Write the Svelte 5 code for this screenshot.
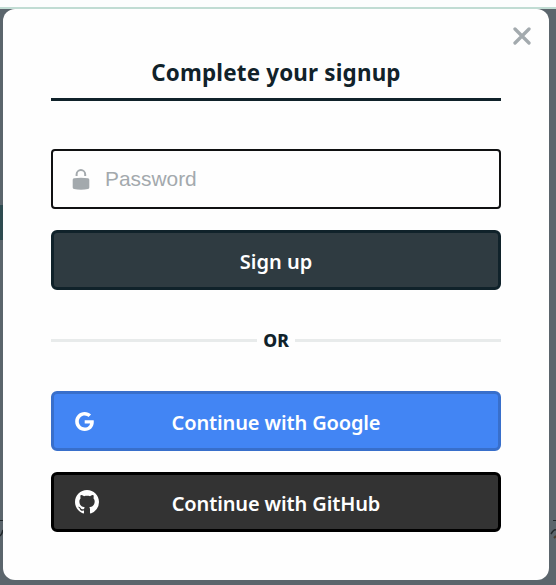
<script>
  let password = $state('');
</script>

<div class="page">
  <div class="topbar"></div>
  <div class="backdrop">
    <span class="accent"></span>
    <svg class="sketch" width="556" height="60" viewBox="0 0 556 60" fill="none" stroke="#20272a">
      <path d="M0 20.5H3M553 20.5H556" />
      <path d="M0 36Q2 34 3 30M551 34Q554 29 556 30" stroke-width="1.5" />
      <path d="M554 38L556 36" stroke="#4c3b2d" stroke-width="2" />
    </svg>
    <section class="modal">
      <button class="close" aria-label="Close">
        <svg width="18" height="18" viewBox="0 0 18 18" fill="none" stroke="#a3aaae" stroke-width="3.3" stroke-linecap="round">
          <path d="M2 2L16 16M16 2L2 16" />
        </svg>
      </button>
      <h1><span>Complete your signup</span></h1>
      <label class="field">
        <svg width="18" height="22" viewBox="0 0 18 22" fill="none">
          <path d="M4.6 8V6.4a4.3 4.3 0 0 1 8.6 0V8" stroke="#a3a9ad" stroke-width="2" />
          <path d="M2 10.2Q9 9.1 16 10.2Q17.3 10.4 17.3 11.7V19.6Q17.3 20.9 16 21.1Q9 22.2 2 21.1Q.7 20.9 .7 19.6V11.7Q.7 10.4 2 10.2Z" fill="#a3a9ad" />
        </svg>
        <input type="password" placeholder="Password" bind:value={password} />
      </label>
      <button class="btn signup"><span>Sign up</span></button>
      <div class="divider"><span>OR</span></div>
      <button class="btn google">
        <svg class="g" width="19" height="19" viewBox="0 0 24 24" fill="#fff">
          <path d="M12.24 10.285V14.4h6.806c-.275 1.765-2.056 5.174-6.806 5.174-4.095 0-7.439-3.389-7.439-7.574s3.345-7.574 7.439-7.574c2.33 0 3.891.989 4.785 1.849l3.254-3.138C18.189 1.186 15.479 0 12.24 0c-6.635 0-12 5.365-12 12s5.365 12 12 12c6.926 0 11.52-4.869 11.52-11.726 0-.788-.085-1.39-.189-1.989H12.24z" />
        </svg>
        <span>Continue with Google</span>
      </button>
      <button class="btn github">
        <svg class="gh" width="24" height="24" viewBox="0 0 16 16" fill="#fff">
          <path d="M8 0C3.58 0 0 3.58 0 8c0 3.54 2.29 6.53 5.47 7.59.4.07.55-.17.55-.38 0-.19-.01-.82-.01-1.49-2.01.37-2.53-.49-2.69-.94-.09-.23-.48-.94-.82-1.13-.28-.15-.68-.52-.01-.53.63-.01 1.08.58 1.23.82.72 1.21 1.87.87 2.33.66.07-.52.28-.87.51-1.07-1.78-.2-3.64-.89-3.64-3.95 0-.87.31-1.59.82-2.15-.08-.2-.36-1.02.08-2.12 0 0 .67-.21 2.2.82.64-.18 1.32-.27 2-.27s1.36.09 2 .27c1.53-1.04 2.2-.82 2.2-.82.44 1.1.16 1.92.08 2.12.51.56.82 1.27.82 2.15 0 3.07-1.87 3.75-3.65 3.95.29.25.54.73.54 1.48 0 1.07-.01 1.93-.01 2.2 0 .21.15.46.55.38A8.01 8.01 0 0 0 16 8c0-4.42-3.58-8-8-8z" />
        </svg>
        <span>Continue with GitHub</span>
      </button>
    </section>
  </div>
</div>

<style>
  :global(body) { overflow: hidden; }
  .page, .page * { box-sizing: border-box; }
  .page {
    width: 556px;
    height: 585px;
    display: flex;
    flex-direction: column;
    font-family: "Noto Sans", "Open Sans", sans-serif;
    color: #10222a;
  }
  .topbar { height: 9px; flex: none; background: #fcfdfd; border-bottom: 2px solid #c0dcd3; }
  .backdrop { position: relative; flex: 1; padding: 0 7px 5px 3px; background: #5b656c; }
  .accent { position: absolute; left: 0; top: 196px; width: 3px; height: 35px; background: #2e4b50; }
  .sketch { position: absolute; left: 0; top: 491px; }
  .modal {
    position: relative;
    display: flex;
    flex-direction: column;
    height: 571px;
    padding: 44px 48px 0;
    background: #fefefe;
    border-radius: 12px;
  }
  button { font-family: inherit; margin: 0; cursor: pointer; }
  .close { position: absolute; right: 18px; top: 18px; padding: 0; border: 0; background: none; display: flex; }
  h1 {
    margin: 0;
    height: 48px;
    border-bottom: 3px solid #10222a;
    text-align: center;
    font-size: 22.4px;
    letter-spacing: 0.18px;
    line-height: 40px;
    font-weight: 700;
    white-space: nowrap;
  }
  .field {
    display: flex;
    align-items: center;
    height: 60px;
    margin-top: 48px;
    padding: 0 20px 0 19px;
    border: 2px solid #101112;
    border-radius: 4px;
  }
  input {
    flex: 1;
    min-width: 0;
    margin-left: 15px;
    padding: 0;
    border: 0;
    outline: 0;
    background: none;
    font: 20.9px "Liberation Sans", Arial, sans-serif;
  }
  input::placeholder { color: #a3a9ad; opacity: 1; }
  .btn {
    display: flex;
    align-items: center;
    justify-content: center;
    position: relative;
    height: 60px;
    padding: 0;
    border: 3px solid;
    border-radius: 6px;
    color: #fff;
    font-size: 20px;
    font-weight: 600;
    line-height: 28px;
    white-space: nowrap;
  }
  .btn span { margin-top: 4px; }
  .signup { margin-top: 21px; background: #2f3b41; border-color: #10222a; }
  .divider {
    display: flex;
    align-items: center;
    gap: 6px;
    height: 20px;
    margin: 40px 0 41px;
    font-size: 17.5px;
    line-height: 20px;
    font-weight: 800;
  }
  .divider::before, .divider::after { content: ""; flex: 1; height: 3px; background: #e8ebeb; }
  .google, .github { letter-spacing: -0.13px; }
  .google { background: #4285f4; border-color: #386fcb; }
  .github { margin-top: 21px; background: #333; border-color: #000; }
  .g, .gh { position: absolute; }
  .g { left: 21px; top: 17.5px; }
  .gh { left: 21px; top: 15px; }
</style>
